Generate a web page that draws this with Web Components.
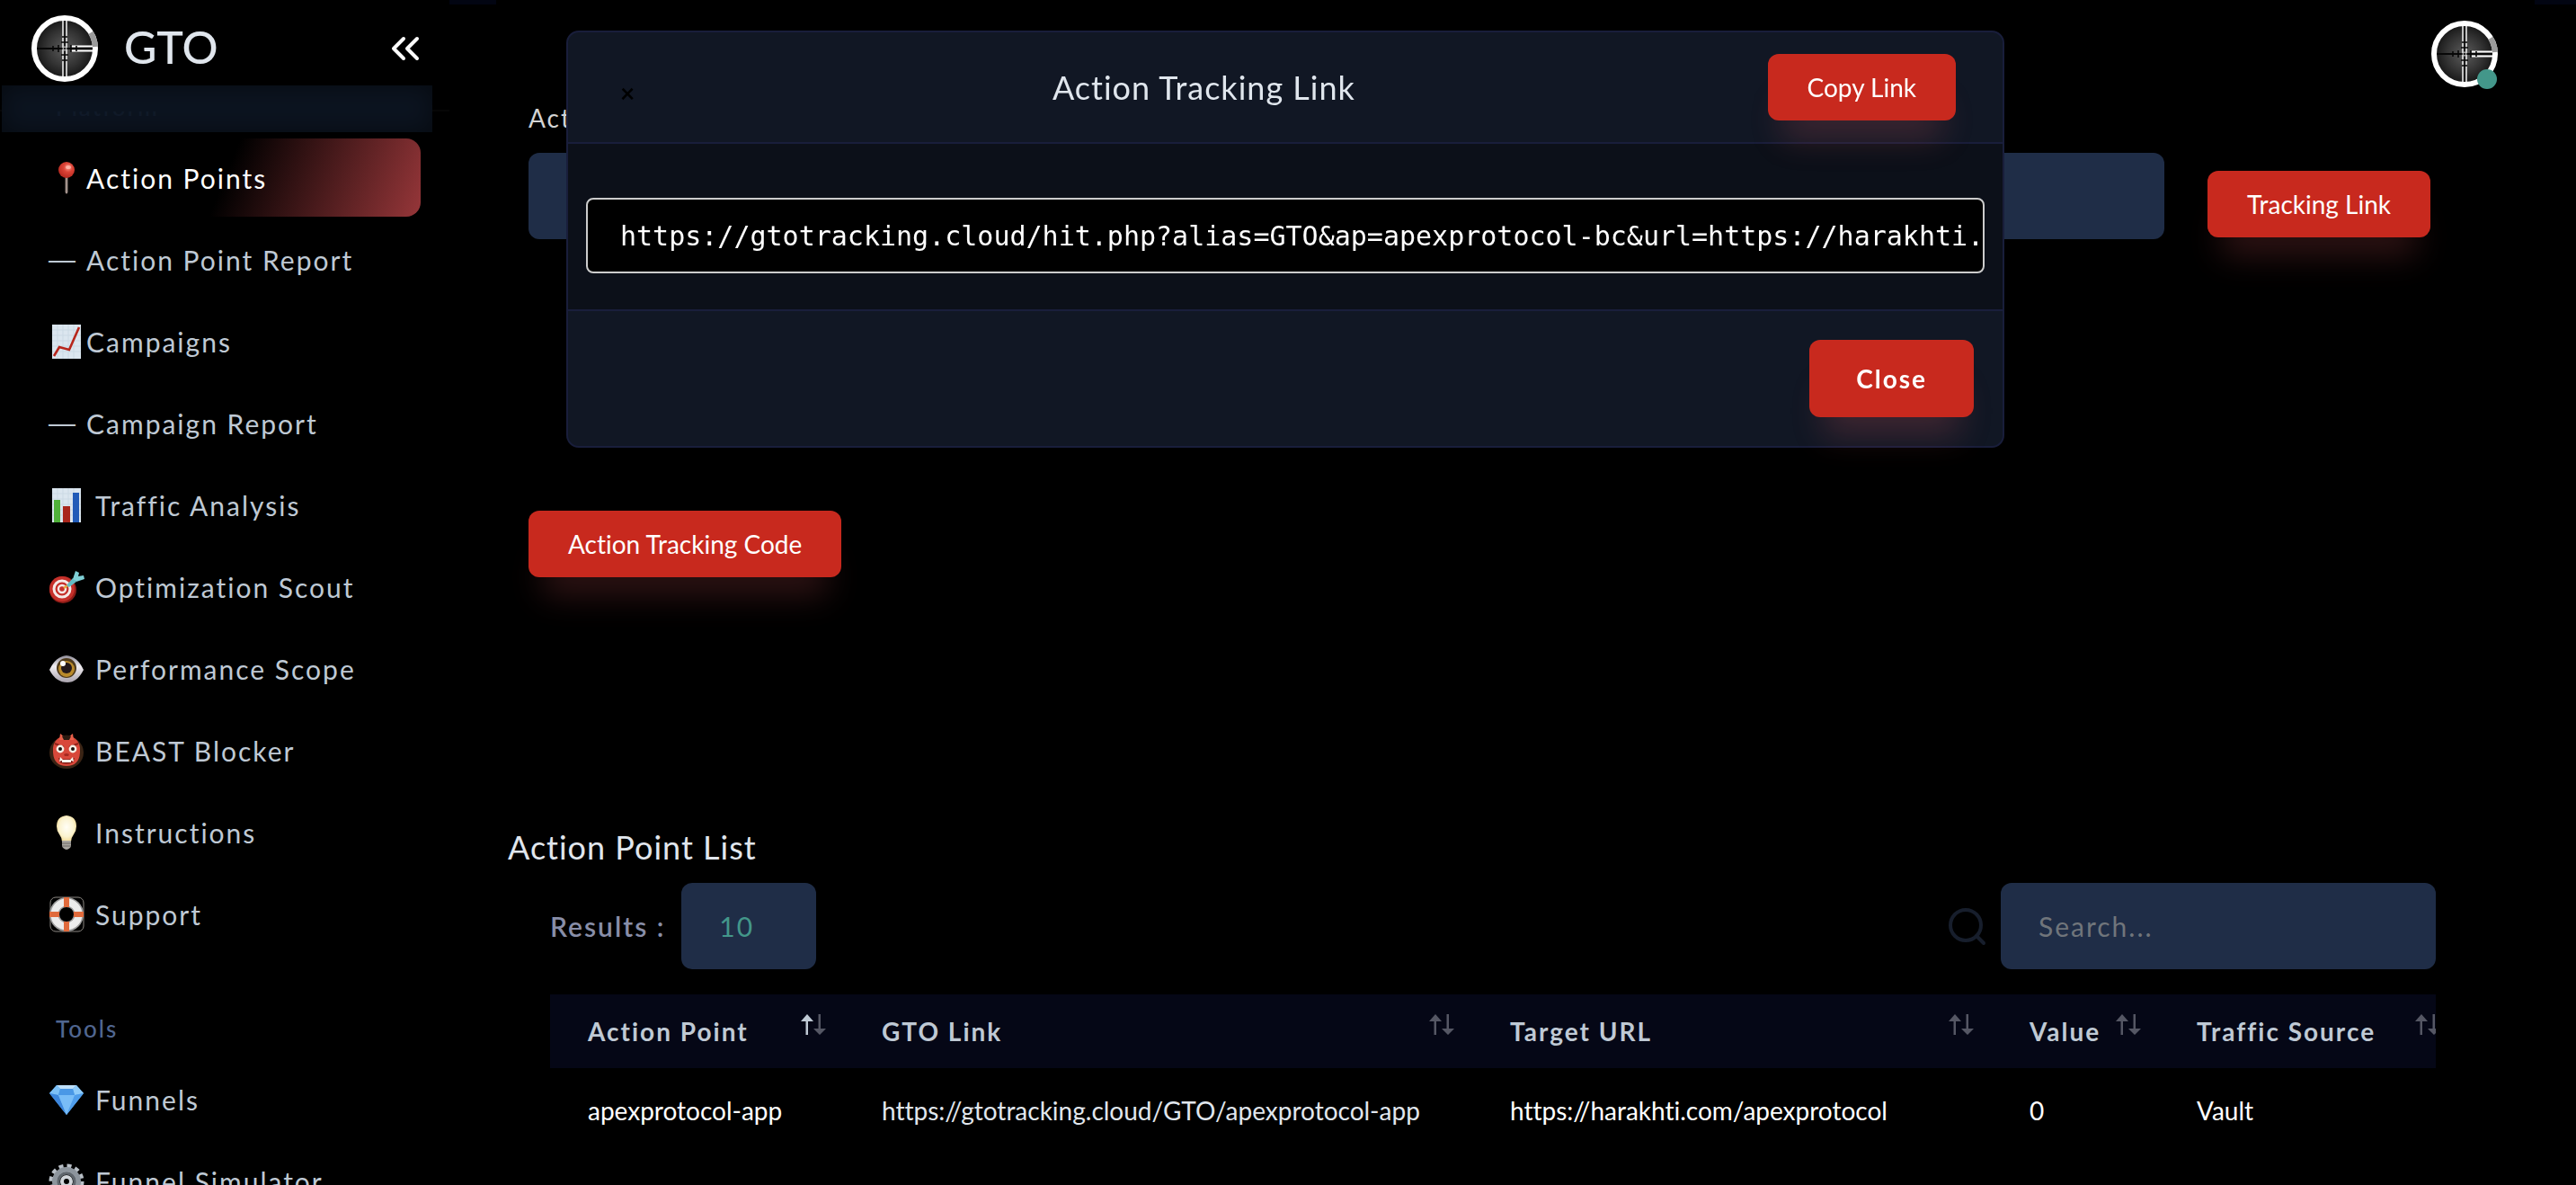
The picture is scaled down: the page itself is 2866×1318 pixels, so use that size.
<!DOCTYPE html>
<html lang="en">
<head>
<meta charset="utf-8">
<meta name="viewport" content="width=device-width, initial-scale=1">
<title>GTO - Action Points</title>
<style>
    html, body {
        height: 100%;
        margin: 0;
        overflow: hidden;
        background: #000;
    }
    body {
        font-family: Lato, "Noto Sans", sans-serif;
        font-size: 28px;
        font-variant-ligatures: none;
        color: #fff;
        --accent: #c8291e;
        --field: #1f2d47;
        --muted: #bfc9d4;
        --teal: #43978a;
        --line: #191e3b;
    }
</style>
</head>
<body>
<gto-app></gto-app>

<script>
const ICONS = {
    pin: `
        <defs><radialGradient id="g" cx=".6" cy=".35" r=".7"><stop offset="0" stop-color="#ff9a8c"/><stop offset=".4" stop-color="#dc4437"/><stop offset="1" stop-color="#b3261d"/></radialGradient></defs>
        <path d="M18.6 19h2.8v17q-1.4 3-2.8 0z" fill="#a3938c"/>
        <circle cx="20" cy="11" r="9" fill="url(#g)"/>
        <ellipse cx="22" cy="8" rx="3" ry="2" fill="#ffc3b8" opacity=".7"/>`,
    chart: `
        <rect x="4" y="1" width="32" height="38" fill="#dbe6ef"/>
        <path d="M4 7h32M4 13h32M4 19h32M4 25h32M4 31h32M10 1v38M16 1v38M22 1v38M28 1v38" stroke="#cbd9e4" stroke-width="1"/>
        <path d="M6 36l6-10 11 3L34 4" fill="none" stroke="#b7261c" stroke-width="2.6"/>`,
    bars: `
        <rect x="4" y="1" width="32" height="38" fill="#dbe6ef"/>
        <path d="M4 7h32M4 13h32M4 19h32M4 25h32M4 31h32M10 1v38M16 1v38M22 1v38M28 1v38" stroke="#cbd9e4" stroke-width="1"/>
        <rect x="6" y="14" width="7" height="25" fill="#50b13a"/>
        <rect x="16" y="21" width="8" height="18" fill="#a9261c"/>
        <rect x="27" y="6" width="7" height="33" fill="#215bb8"/>`,
    target: `
        <ellipse cx="16" cy="23" rx="15" ry="15" fill="#8d1c17"/>
        <ellipse cx="15" cy="22" rx="14" ry="14" fill="#c5302a"/>
        <circle cx="15" cy="22" r="9" fill="none" stroke="#f5e9e7" stroke-width="3"/>
        <circle cx="15" cy="22" r="4" fill="none" stroke="#f5e9e7" stroke-width="2.4"/>
        <path d="M17 21l9-6" stroke="#e4a33b" stroke-width="2.4"/>
        <path d="M20 18l7-8 4 4-8 6z" fill="#63bcc4"/>
        <path d="M27 11l3-9 4 2-1 4 6-1 1 4-9 3z" fill="#7fd0d6"/>`,
    eye: `
        <defs><linearGradient id="w" x2="0" y2="1"><stop offset="0" stop-color="#8d8a96"/><stop offset=".4" stop-color="#f1eef2"/><stop offset="1" stop-color="#aaa4ae"/></linearGradient></defs>
        <path d="M1 21Q8 6 20 5q12 1 19 16Q32 35 21 35 8 35 1 21z" fill="url(#w)"/>
        <circle cx="20" cy="19" r="11" fill="#4e3a1c"/>
        <circle cx="20" cy="20" r="9" fill="#b98a2b"/>
        <circle cx="20" cy="19" r="6" fill="#23181a"/>
        <circle cx="16" cy="14" r="3" fill="#fff"/>`,
    ogre: `
        <ellipse cx="20" cy="22" rx="19" ry="18" fill="#3a2415"/>
        <path d="M20 3q5 0 9 3 7 5 6 16-1 15-15 15T5 22Q4 11 11 6q4-3 9-3z" fill="#d8483a"/>
        <path d="M12 8l1-7q4 2 4 7zM28 8l-1-7q-4 2-4 7z" fill="#e8604a"/>
        <path d="M15 4q5-3 10 0l-2 4h-6z" fill="#2a1a10"/>
        <path d="M7 12l10 4M33 12l-10 4" stroke="#8f2118" stroke-width="2"/>
        <circle cx="13" cy="18" r="4.4" fill="#f6f0e6"/><circle cx="27" cy="18" r="4.4" fill="#f6f0e6"/>
        <circle cx="13" cy="18" r="2" fill="#1c1210"/><circle cx="27" cy="18" r="2" fill="#1c1210"/>
        <path d="M17 24q3-2 6 0l-1 2h-4z" fill="#a52a20"/>
        <path d="M11 28q9 3 18 0l-2 5q-7 3-14 0z" fill="#7c1710"/>
        <path d="M12 32l1-5 3 3h8l3-3 1 5-3-1v2H15v-2z" fill="#fbf6ec"/>`,
    bulb: `
        <defs><radialGradient id="b" cx=".5" cy=".45" r=".6"><stop offset="0" stop-color="#fffef6"/><stop offset=".6" stop-color="#fbf3d0"/><stop offset="1" stop-color="#f0d68a"/></radialGradient></defs>
        <path d="M20 1q11 1 11 12 0 5-3 9-3 4-3 8H15q0-4-3-8-3-4-3-9Q9 2 20 1z" fill="url(#b)"/>
        <path d="M15 29h10v6q-1 3-5 4-4-1-5-4z" fill="#a8a59f"/>
        <path d="M15 32h10M15 35h10" stroke="#6e6b66" stroke-width="1"/>`,
    buoy: `
        <rect x="2" y="1" width="37" height="38" rx="6" fill="none" stroke="#8b8782" stroke-width="1"/>
        <circle cx="20" cy="20" r="13.5" fill="none" stroke="#9c9c9c" stroke-width="11"/>
        <circle cx="20" cy="20" r="13.5" fill="none" stroke="#ececec" stroke-width="8"/>
        <path d="M17 1h6v11h-6zM17 28h6v11h-6z" fill="#e06a3c"/>
        <path d="M1 17h11v6H1zM28 17h11v6H28z" fill="#e06a3c"/>`,
    gem: `
        <path d="M9 4h22l8 9-19 24L1 13z" fill="#5aaaf0"/>
        <path d="M9 4h22l-4 4H13z" fill="#bfe0fb"/>
        <path d="M1 13l8-9 4 4-2 7z" fill="#7cc0f6"/>
        <path d="M39 13l-8-9-4 4 2 7z" fill="#8fcbf9"/>
        <path d="M13 8h14l2 7H11z" fill="#4a98e6"/>
        <path d="M1 13l10 2 9 22z" fill="#3c86dc"/>
        <path d="M39 13l-10 2-9 22z" fill="#4f9deb"/>
        <path d="M11 15h18l-9 22z" fill="#79bdf7"/>`,
    gear: `
        <circle cx="20" cy="20" r="17" fill="none" stroke="#b8bfc6" stroke-width="5" stroke-dasharray="4.9 4" />
        <circle cx="20" cy="20" r="13" fill="none" stroke="#8d959d" stroke-width="6"/>
        <circle cx="20" cy="20" r="9" fill="none" stroke="#5f666d" stroke-width="3"/>
        <circle cx="20" cy="20" r="5" fill="none" stroke="#d0d5da" stroke-width="4"/>`
};

// Scope shaped brand mark, used by the sidebar and the profile button
class GtoLogo extends HTMLElement {
    constructor() {
        super();
        this.attachShadow({ mode: 'open' });
        this.shadowRoot.innerHTML = `
            <style>
                :host { display: block; width: 76px; height: 76px; }
                svg { display: block; width: 100%; height: 100%; }
            </style>
            <svg viewBox="0 0 76 76" aria-hidden="true">
                <defs>
                    <radialGradient id="lens">
                        <stop offset="0" stop-color="#5c5c5c"/>
                        <stop offset=".6" stop-color="#343434"/>
                        <stop offset="1" stop-color="#161616"/>
                    </radialGradient>
                </defs>
                <circle cx="38" cy="38" r="33" fill="url(#lens)"/>
                <path d="M36 6v64M40 6v64" stroke="#e8e8e8" stroke-width="1.6"/>
                <path d="M38 6v64" stroke="#1d1d1d" stroke-width="2"/>
                <path d="M45 35.500h25M45 40.500h25" stroke="#fff" stroke-width="2"/>
                <path d="M6 38h64" stroke="#080808" stroke-width="2"/>
                <path d="M25 35v6M31 34v8M45 34v8M51 35v6M35 25h6M34 31h8M34 45h8M35 51h6" stroke="#080808" stroke-width="1.6"/>
                <circle cx="38" cy="38" r="2" fill="#222" stroke="#ddd" stroke-width="1"/>
                <circle cx="38" cy="38" r="34" fill="none" stroke="#fff" stroke-width="6"/>
                <path d="M67 20.300A34 34 0 0 1 72 36" fill="none" stroke="#9b9b9b" stroke-width="6"/>
            </svg>
        `;
    }
}
customElements.define('gto-logo', GtoLogo);

class RedButton extends HTMLElement {
    constructor() {
        super();
        this.attachShadow({ mode: 'open' });
        this.shadowRoot.innerHTML = `
            <style>
                :host { display: inline-block; }
                button {
                    height: 74px;
                    padding: 0 44px;
                    border: 0;
                    border-radius: 12px;
                    background: var(--accent);
                    box-shadow: 0 36px 36px -16px rgba(225, 90, 95, 0.22);
                    color: #fff;
                    font: inherit;
                    font-size: 28px;
                    font-variant-ligatures: inherit;
                    line-height: 34px;
                    white-space: nowrap;
                    cursor: pointer;
                }
                :host([large]) button {
                    height: 86px;
                    padding: 0 52px;
                    font-weight: 700;
                    letter-spacing: 2px;
                }
            </style>
            <button type="button"><slot></slot></button>
        `;
    }
}
customElements.define('red-button', RedButton);

class NavItem extends HTMLElement {
    constructor() {
        super();
        this.attachShadow({ mode: 'open' });
    }
    connectedCallback() {
        const icon = ICONS[this.getAttribute('icon')];
        this.shadowRoot.innerHTML = `
            <style>
                :host { display: block; }
                a {
                    display: flex;
                    align-items: center;
                    gap: 12px;
                    height: 87px;
                    padding: 0 22px;
                    border-radius: 16px;
                    color: var(--muted);
                    font-size: 30px;
                    line-height: 36px;
                    letter-spacing: 2px;
                    text-decoration: none;
                    white-space: nowrap;
                }
                .icon {
                    flex: none;
                    width: 40px;
                    height: 40px;
                    font-family: "Liberation Sans", sans-serif;
                    line-height: 40px;
                }
                svg { display: block; width: 40px; height: 40px; }
                :host([tight]) a { gap: 2px; }
                :host([active]) a {
                    color: #fff;
                    background: linear-gradient(112deg, #000 50%, #963639 100%);
                }
            </style>
            <a href="#">
                <span class="icon">${icon ? `<svg viewBox="0 0 40 40" aria-hidden="true">${icon}</svg>` : '—'}</span>
                <slot></slot>
            </a>
        `;
    }
}
customElements.define('nav-item', NavItem);

class AppSidebar extends HTMLElement {
    constructor() {
        super();
        this.attachShadow({ mode: 'open' });
        this.shadowRoot.innerHTML = `
            <style>
                :host {
                    display: flex;
                    flex-direction: column;
                    position: relative;
                    min-height: 0;
                    background: #000;
                }
                header {
                    display: flex;
                    align-items: center;
                    padding: 16px 32px 30px 34px;
                    border-bottom: 2px solid #060606;
                }
                .brand {
                    margin-left: 28px;
                    padding-bottom: 4px;
                    color: #e0e6ed;
                    font-size: 50px;
                    font-weight: 500;
                    line-height: 60px;
                }
                header button {
                    margin-left: auto;
                    padding: 0;
                    border: 0;
                    background: none;
                    cursor: pointer;
                }
                header svg { display: block; width: 36px; height: 32px; }
                .fade {
                    position: absolute;
                    top: 95px;
                    left: 2px;
                    right: 19px;
                    height: 52px;
                    background: rgba(13, 21, 34, 0.93);
                    box-shadow: inset 0 0 28px rgba(0, 0, 0, 0.5);
                    pointer-events: none;
                }
                nav {
                    flex: 1;
                    min-height: 0;
                    overflow: hidden auto;
                    scrollbar-width: none;
                    padding: 0 32px 40px;
                }
                h2 {
                    margin: 0;
                    padding: 64px 30px 15px;
                    color: #506690;
                    font-size: 26px;
                    font-weight: 500;
                    line-height: 40px;
                    letter-spacing: 2px;
                }
                .items { display: grid; gap: 4px; }
            </style>
            <header>
                <gto-logo></gto-logo>
                <span class="brand">GTO</span>
                <button type="button" aria-label="Collapse sidebar">
                    <svg viewBox="0 0 36 32" fill="none" stroke="#fff" stroke-width="4" stroke-linecap="round" stroke-linejoin="round">
                        <path d="M17 5L6 16l11 11M32 5L21 16l11 11"/>
                    </svg>
                </button>
            </header>
            <nav aria-label="Main">
                <h2>Platform</h2>
                <div class="items">
                    <nav-item icon="pin" active tight>Action Points</nav-item>
                    <nav-item tight>Action Point Report</nav-item>
                    <nav-item icon="chart" tight>Campaigns</nav-item>
                    <nav-item tight>Campaign Report</nav-item>
                    <nav-item icon="bars">Traffic Analysis</nav-item>
                    <nav-item icon="target">Optimization Scout</nav-item>
                    <nav-item icon="eye">Performance Scope</nav-item>
                    <nav-item icon="ogre">BEAST Blocker</nav-item>
                    <nav-item icon="bulb">Instructions</nav-item>
                    <nav-item icon="buoy">Support</nav-item>
                </div>
                <h2>Tools</h2>
                <div class="items">
                    <nav-item icon="gem">Funnels</nav-item>
                    <nav-item icon="gear">Funnel Simulator</nav-item>
                </div>
            </nav>
            <div class="fade"></div>
        `;
    }
    connectedCallback() {
        // Bring the active item right under the header
        const nav = this.shadowRoot.querySelector('nav');
        const active = this.shadowRoot.querySelector('nav-item[active]');
        nav.scrollTop = active.offsetTop - nav.offsetTop - 30;
    }
}
customElements.define('app-sidebar', AppSidebar);

class ProfileButton extends HTMLElement {
    constructor() {
        super();
        this.attachShadow({ mode: 'open' });
        this.shadowRoot.innerHTML = `
            <style>
                :host { display: block; }
                button {
                    display: block;
                    position: relative;
                    padding: 0;
                    border: 0;
                    background: none;
                    cursor: pointer;
                }
                .status {
                    position: absolute;
                    right: 2px;
                    bottom: -1px;
                    width: 22px;
                    height: 22px;
                    border-radius: 50%;
                    background: var(--teal);
                }
            </style>
            <button type="button" aria-label="Profile">
                <gto-logo></gto-logo>
                <span class="status"></span>
            </button>
        `;
    }
}
customElements.define('profile-button', ProfileButton);

class ActionForm extends HTMLElement {
    constructor() {
        super();
        this.attachShadow({ mode: 'open' });
        this.shadowRoot.innerHTML = `
            <style>
                :host { display: block; }
                form {
                    display: grid;
                    grid-template-columns: 1fr auto;
                    column-gap: 48px;
                    align-items: end;
                }
                label {
                    display: block;
                    margin-bottom: 22px;
                    color: #d3d3d3;
                    font-size: 28px;
                    line-height: 34px;
                    letter-spacing: 2px;
                }
                select {
                    display: block;
                    appearance: none;
                    width: 100%;
                    height: 96px;
                    padding: 0 42px;
                    border: 0;
                    border-radius: 12px;
                    background: var(--field);
                    color: var(--teal);
                    font: inherit;
                    font-size: 30px;
                }
                .link { padding-bottom: 2px; }
                .code { grid-column: 1 / -1; margin-top: 302px; }
            </style>
            <form>
                <div>
                    <label for="point">Action</label>
                    <select id="point"><option>apexprotocol-bc</option></select>
                </div>
                <red-button class="link">Tracking Link</red-button>
                <red-button class="code">Action Tracking Code</red-button>
            </form>
        `;
    }
}
customElements.define('action-form', ActionForm);

class SortArrows extends HTMLElement {
    constructor() {
        super();
        this.attachShadow({ mode: 'open' });
        this.shadowRoot.innerHTML = `
            <style>
                :host { display: block; flex: none; width: 28px; height: 24px; }
                svg { display: block; }
                path { fill: #555764; }
                :host([asc]) .up { fill: var(--muted); }
            </style>
            <svg width="28" height="24" viewBox="0 0 28 24" aria-hidden="true">
                <path class="up" d="M7 0l7 8H8v15H5.500V8H0z"/>
                <path d="M21 23l-7-7h5.500V0H22v16h6z"/>
            </svg>
        `;
    }
}
customElements.define('sort-arrows', SortArrows);

class PointTable extends HTMLElement {
    constructor() {
        super();
        this.attachShadow({ mode: 'open' });
        this.shadowRoot.innerHTML = `
            <style>
                :host { display: block; }
                .toolbar {
                    display: flex;
                    justify-content: space-between;
                    margin-bottom: 28px;
                }
                .group { display: flex; align-items: center; }
                label {
                    color: #888ea8;
                    font-size: 30px;
                    font-weight: 600;
                    line-height: 36px;
                    letter-spacing: 2px;
                }
                .results { gap: 18px; }
                .search { gap: 16px; }
                .search svg { display: block; width: 44px; height: 44px; }
                select, input {
                    box-sizing: border-box;
                    appearance: none;
                    height: 96px;
                    padding: 0 42px;
                    border: 0;
                    border-radius: 12px;
                    background: var(--field);
                    color: var(--teal);
                    font: inherit;
                    font-size: 30px;
                    letter-spacing: 2px;
                }
                select { width: 150px; }
                input { width: 484px; }
                input::placeholder { color: #70757b; }
                .scroll { overflow: hidden; }
                table {
                    min-width: 100%;
                    border-collapse: collapse;
                    table-layout: fixed;
                    width: 2123px;
                    text-align: left;
                    white-space: nowrap;
                }
                .point { width: 327px; }
                .gto { width: 699px; }
                .url { width: 578px; }
                .value { width: 186px; }
                th {
                    height: 82px;
                    padding: 0 20px 0 42px;
                    background: #050716;
                    color: var(--muted);
                    font-size: 28px;
                    font-weight: 700;
                    letter-spacing: 2px;
                }
                th div {
                    display: flex;
                    align-items: center;
                    justify-content: space-between;
                }
                sort-arrows { margin-bottom: 14px; }
                td {
                    height: 94px;
                    padding: 0 20px 0 42px;
                    font-size: 28px;
                }
                td a { color: #e0e6ed; text-decoration: none; }
            </style>
            <div class="toolbar">
                <div class="group results">
                    <label for="size">Results :</label>
                    <select id="size"><option>10</option><option>20</option><option>50</option></select>
                </div>
                <div class="group search">
                    <svg viewBox="0 0 44 44" fill="none" stroke="#171e2c" stroke-width="4" stroke-linecap="round" aria-hidden="true">
                        <circle cx="21" cy="21" r="17"/><path d="M33 33l8 8"/>
                    </svg>
                    <input type="text" placeholder="Search..." aria-label="Search">
                </div>
            </div>
            <div class="scroll">
                <table>
                    <colgroup><col class="point"><col class="gto"><col class="url"><col class="value"><col></colgroup>
                    <thead>
                        <tr>
                            <th><div>Action Point<sort-arrows asc></sort-arrows></div></th>
                            <th><div>GTO Link<sort-arrows></sort-arrows></div></th>
                            <th><div>Target URL<sort-arrows></sort-arrows></div></th>
                            <th><div>Value<sort-arrows></sort-arrows></div></th>
                            <th><div>Traffic Source<sort-arrows></sort-arrows></div></th>
                        </tr>
                    </thead>
                    <tbody>
                        <tr>
                            <td>apexprotocol-app</td>
                            <td><a href="#">https://gtotracking.cloud/GTO/apexprotocol-app</a></td>
                            <td>https://harakhti.com/apexprotocol</td>
                            <td>0</td>
                            <td>Vault</td>
                        </tr>
                    </tbody>
                </table>
            </div>
        `;
    }
}
customElements.define('point-table', PointTable);

class LinkModal extends HTMLElement {
    constructor() {
        super();
        this.attachShadow({ mode: 'open' });
        this.shadowRoot.innerHTML = `
            <style>
                :host {
                    display: flex;
                    justify-content: center;
                    align-items: flex-start;
                    position: fixed;
                    inset: 0;
                    padding: 34px 6px 0 0;
                }
                .dialog {
                    box-sizing: border-box;
                    width: 100%;
                    max-width: 1600px;
                    border: 2px solid var(--line);
                    border-radius: 14px;
                    background: #111724;
                }
                header {
                    display: flex;
                    align-items: center;
                    justify-content: space-between;
                    padding: 24px 52px;
                    border-bottom: 2px solid var(--line);
                }
                h1 {
                    margin: 0;
                    color: #e0e6ed;
                    font-size: 36px;
                    font-weight: 400;
                    line-height: 44px;
                    letter-spacing: 1px;
                }
                .x {
                    padding: 12px 6px 0;
                    border: 0;
                    background: none;
                    color: #000;
                    font: inherit;
                    font-size: 28px;
                    font-weight: 700;
                    line-height: 34px;
                    cursor: pointer;
                }
                .body { padding: 60px 20px 40px; background: #0c1019; }
                input {
                    display: block;
                    box-sizing: border-box;
                    width: 100%;
                    height: 84px;
                    padding: 0 0 0 36px;
                    border: 2px solid #ccc;
                    border-radius: 8px;
                    background: #000;
                    color: #fff;
                    font: 30px "DejaVu Sans Mono", monospace;
                }
                footer {
                    display: flex;
                    justify-content: flex-end;
                    padding: 32px;
                    border-top: 2px solid var(--line);
                }
                red-button { position: relative; }
            </style>
            <div class="dialog" role="dialog" aria-labelledby="title">
                <header>
                    <button class="x" type="button" aria-label="Dismiss">×</button>
                    <h1 id="title">Action Tracking Link</h1>
                    <red-button class="copy">Copy Link</red-button>
                </header>
                <div class="body">
                    <input type="text" readonly aria-labelledby="title" value="https://gtotracking.cloud/hit.php?alias=GTO&amp;ap=apexprotocol-bc&amp;url=https://harakhti.com/apexprotocol">
                </div>
                <footer><red-button large>Close</red-button></footer>
            </div>
        `;
        const input = this.shadowRoot.querySelector('input');
        this.shadowRoot.querySelector('.copy').addEventListener('click', () => {
            input.select();
            document.execCommand('copy');
        });
        this.shadowRoot.querySelector('.x').addEventListener('click', () => this.remove());
        this.shadowRoot.querySelector('footer red-button').addEventListener('click', () => this.remove());
    }
}
customElements.define('link-modal', LinkModal);

class GtoApp extends HTMLElement {
    constructor() {
        super();
        this.attachShadow({ mode: 'open' });
        this.shadowRoot.innerHTML = `
            <style>
                :host {
                    display: grid;
                    grid-template-columns: 500px minmax(0, 1fr);
                    grid-template-rows: minmax(0, 1fr);
                    height: 100vh;
                }
                main { overflow: hidden; }
                .strip { height: 5px; padding: 0 46px 0 52px; background: #020512; }
                .strip div { height: 5px; background: #000; }
                .top {
                    display: flex;
                    justify-content: flex-end;
                    padding: 17px 86px 16px 0;
                }
                action-form { margin: 0 162px 0 88px; }
                h2 {
                    margin: 278px 156px 18px 65px;
                    color: #e0e6ed;
                    font-size: 36px;
                    font-weight: 400;
                    line-height: 44px;
                    letter-spacing: 1px;
                }
                point-table { margin: 0 156px 0 112px; }
            </style>
            <app-sidebar></app-sidebar>
            <main>
                <div class="strip"><div></div></div>
                <div class="top"><profile-button></profile-button></div>
                <action-form></action-form>
                <h2>Action Point List</h2>
                <point-table></point-table>
            </main>
            <link-modal></link-modal>
        `;
    }
}
customElements.define('gto-app', GtoApp);
</script>
</body>
</html>
